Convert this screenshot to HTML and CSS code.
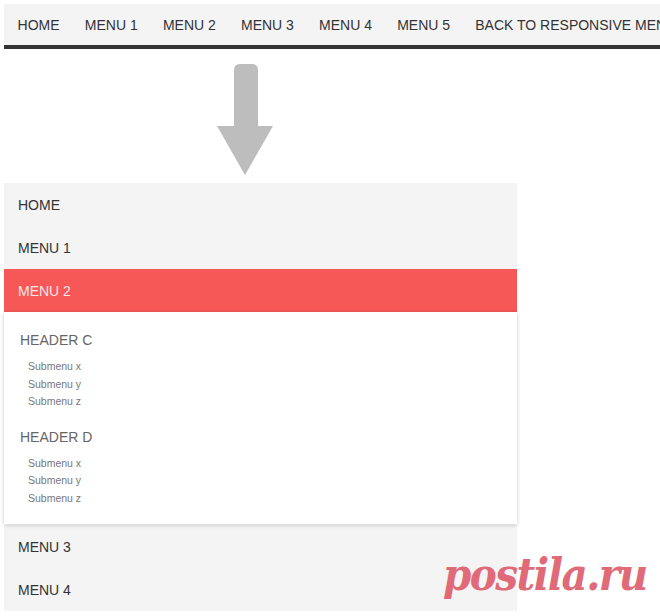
FILE: index.html
```html
<!DOCTYPE html>
<html>
<head>
<meta charset="utf-8">
<link rel="stylesheet" href="styles.css">
</head>
<body>
<div class="page">
  <nav class="topnav">
    <a class="topnav-item">HOME</a>
    <a class="topnav-item">MENU 1</a>
    <a class="topnav-item">MENU 2</a>
    <a class="topnav-item">MENU 3</a>
    <a class="topnav-item">MENU 4</a>
    <a class="topnav-item">MENU 5</a>
    <a class="topnav-item">BACK TO RESPONSIVE MENU</a>
  </nav>
  <div class="arrow-wrap">
    <svg class="arrow" width="56" height="114" viewBox="0 0 56 114">
      <path d="M17 7 Q17 1 23 1 L35 1 Q41 1 41 7 L41 63 L56 63 L28 112 L0 63 L17 63 Z" fill="#bdbdbd"/>
    </svg>
  </div>
  <ul class="mmenu">
    <li class="mmenu-item">HOME</li>
    <li class="mmenu-item">MENU 1</li>
    <li class="mmenu-item active">MENU 2</li>
    <li class="dropdown">
      <div class="group">
        <div class="group-header">HEADER C</div>
        <div class="sub">Submenu x</div>
        <div class="sub">Submenu y</div>
        <div class="sub">Submenu z</div>
      </div>
      <div class="group">
        <div class="group-header">HEADER D</div>
        <div class="sub">Submenu x</div>
        <div class="sub">Submenu y</div>
        <div class="sub">Submenu z</div>
      </div>
    </li>
    <li class="mmenu-item">MENU 3</li>
    <li class="mmenu-item">MENU 4</li>
  </ul>
  <div class="watermark">postila.ru</div>
</div>
</body>
</html>
```

FILE: styles.css
```css
html, body {
  margin: 0;
  padding: 0;
  background: #fff;
  overflow: hidden;
}
body {
  font-family: "Liberation Sans", Arial, sans-serif;
  color: #333;
}
.page {
  position: relative;
  width: 660px;
  height: 616px;
  padding: 4px 0 0 4px;
  box-sizing: border-box;
  overflow: hidden;
}
.topnav {
  display: flex;
  width: 720px;
  height: 41px;
  background: #f4f4f4;
  border-bottom: 4px solid #333;
  padding-left: 1px;
  white-space: nowrap;
}
.topnav-item {
  display: flex;
  align-items: center;
  padding: 0 12.6px;
  font-size: 14px;
  color: #333;
}
.arrow-wrap {
  display: flex;
  padding: 14px 0 0 213px;
  height: 120px;
  box-sizing: border-box;
}
.arrow {
  display: block;
}
.mmenu {
  list-style: none;
  margin: 14px 0 0 0;
  padding: 0;
  width: 513px;
}
.mmenu-item {
  height: 43px;
  display: flex;
  align-items: center;
  padding-left: 14px;
  background: #f4f4f4;
  font-size: 14px;
  color: #333;
}
.mmenu-item.active {
  background: #f65757;
  color: #fde8e8;
}
.dropdown {
  background: #fff;
  box-shadow: 0 1px 4px rgba(0, 0, 0, 0.22);
  padding: 19px 0 17px 16px;
  position: relative;
  z-index: 1;
  margin-bottom: 1px;
}
.group + .group {
  margin-top: 17px;
}
.group-header {
  font-size: 14px;
  line-height: 18px;
  color: #666;
  margin-bottom: 9px;
}
.sub {
  font-size: 10.5px;
  line-height: 17.5px;
  color: #777;
  padding-left: 8px;
}
.watermark {
  position: absolute;
  left: 443px;
  top: 545px;
  font-family: "DejaVu Serif Condensed", "DejaVu Serif", serif;
  font-style: italic;
  font-weight: bold;
  font-size: 45px;
  line-height: 60px;
  color: #e06a78;
  letter-spacing: -1.5px;
}
```
